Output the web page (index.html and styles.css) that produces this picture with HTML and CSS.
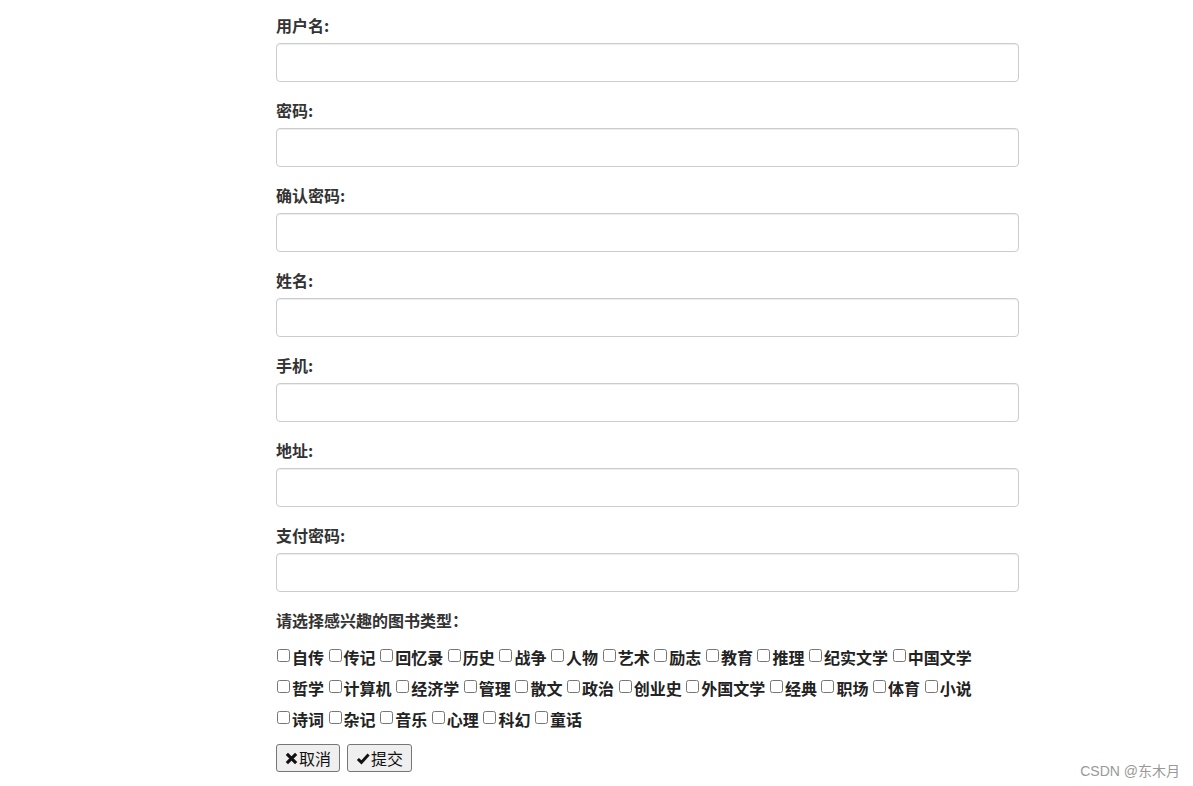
FILE: index.html
```html
<!DOCTYPE html>
<html lang="zh-CN">
<head>
<meta charset="utf-8">
<title>注册</title>
<link rel="stylesheet" href="styles.css">
</head>
<body>
<div class="page">
  <form class="reg-form">
    <div class="form-group">
      <label class="field-label">用户名:</label>
      <input class="form-control" type="text">
    </div>
    <div class="form-group">
      <label class="field-label">密码:</label>
      <input class="form-control" type="password">
    </div>
    <div class="form-group">
      <label class="field-label">确认密码:</label>
      <input class="form-control" type="password">
    </div>
    <div class="form-group">
      <label class="field-label">姓名:</label>
      <input class="form-control" type="text">
    </div>
    <div class="form-group">
      <label class="field-label">手机:</label>
      <input class="form-control" type="text">
    </div>
    <div class="form-group">
      <label class="field-label">地址:</label>
      <input class="form-control" type="text">
    </div>
    <div class="form-group">
      <label class="field-label">支付密码:</label>
      <input class="form-control" type="password">
    </div>
    <div class="types">
      <label class="field-label">请选择感兴趣的图书类型：</label>
      <div class="check-list">
        <label class="check"><input type="checkbox">自传</label>
        <label class="check"><input type="checkbox">传记</label>
        <label class="check"><input type="checkbox">回忆录</label>
        <label class="check"><input type="checkbox">历史</label>
        <label class="check"><input type="checkbox">战争</label>
        <label class="check"><input type="checkbox">人物</label>
        <label class="check"><input type="checkbox">艺术</label>
        <label class="check"><input type="checkbox">励志</label>
        <label class="check"><input type="checkbox">教育</label>
        <label class="check"><input type="checkbox">推理</label>
        <label class="check"><input type="checkbox">纪实文学</label>
        <label class="check"><input type="checkbox">中国文学</label>
        <label class="check"><input type="checkbox">哲学</label>
        <label class="check"><input type="checkbox">计算机</label>
        <label class="check"><input type="checkbox">经济学</label>
        <label class="check"><input type="checkbox">管理</label>
        <label class="check"><input type="checkbox">散文</label>
        <label class="check"><input type="checkbox">政治</label>
        <label class="check"><input type="checkbox">创业史</label>
        <label class="check"><input type="checkbox">外国文学</label>
        <label class="check"><input type="checkbox">经典</label>
        <label class="check"><input type="checkbox">职场</label>
        <label class="check"><input type="checkbox">体育</label>
        <label class="check"><input type="checkbox">小说</label>
        <label class="check"><input type="checkbox">诗词</label>
        <label class="check"><input type="checkbox">杂记</label>
        <label class="check"><input type="checkbox">音乐</label>
        <label class="check"><input type="checkbox">心理</label>
        <label class="check"><input type="checkbox">科幻</label>
        <label class="check"><input type="checkbox">童话</label>
      </div>
    </div>
    <div class="actions">
      <button class="btn" type="button"><svg class="icon" viewBox="0 0 14 14" width="13" height="13"><path d="M2 2 L12 12 M12 2 L2 12" stroke="#111" stroke-width="3.4" fill="none"/></svg>取消</button>
      <button class="btn" type="submit"><svg class="icon" viewBox="0 0 14 14" width="14" height="13"><path d="M1.5 7.5 L5.3 11.2 L13 2.8" stroke="#111" stroke-width="3.2" fill="none" stroke-linejoin="miter"/></svg>提交</button>
    </div>
  </form>
</div>
<div class="watermark">CSDN @东木月</div>
</body>
</html>
```

FILE: styles.css
```css
html, body {
  margin: 0;
  padding: 0;
  background: #fff;
}

body {
  font-family: "Noto Sans CJK SC", "Noto Sans", sans-serif;
  font-size: 16px;
  color: #333;
}

.page {
  padding: 14px 0 0 276px;
}

.reg-form {
  width: 743px;
}

.form-group {
  display: flex;
  flex-direction: column;
  margin-bottom: 17px;
}

.field-label {
  display: block;
  font-weight: 700;
  line-height: 22px;
  margin-bottom: 7px;
}

.form-control {
  box-sizing: border-box;
  width: 100%;
  height: 39px;
  margin: 0;
  padding: 6px 12px;
  border: 1px solid #ccc;
  border-radius: 4px;
  box-shadow: inset 0 1px 1px rgba(0, 0, 0, 0.075);
  font: inherit;
  background: #fff;
}

.types .field-label {
  margin-bottom: 10px;
}

.check-list {
  display: flex;
  flex-wrap: wrap;
  column-gap: 3.6px;
  width: 742px;
}

.check {
  display: inline-flex;
  align-items: center;
  height: 31px;
  font-weight: 700;
  color: #222;
}

.check input {
  width: 13px;
  height: 13px;
  margin: 0 2px 3px 1px;
}

.actions {
  display: flex;
  gap: 7px;
  margin-top: 10px;
}

.btn {
  display: inline-flex;
  align-items: center;
  height: 28px;
  padding: 0 8px 0 8px;
  background: #efefef;
  border: 1px solid #767676;
  border-radius: 3px;
  font-family: inherit;
  font-size: 16px;
  color: #111;
}

.icon {
  margin-right: 1px;
}

.watermark {
  position: absolute;
  right: 13px;
  top: 760px;
  font-family: "Liberation Sans", "Noto Sans CJK SC", sans-serif;
  font-size: 14px;
  color: #999;
}
```
